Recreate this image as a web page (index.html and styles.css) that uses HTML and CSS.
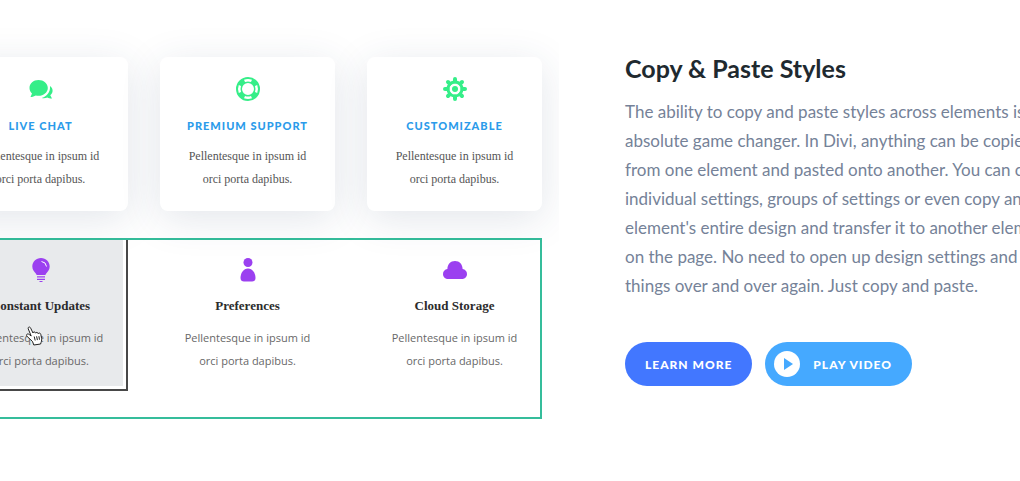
FILE: index.html
```
<!DOCTYPE html>
<html lang="en">
<head>
    <meta charset="UTF-8">
    <meta name="viewport" content="width=device-width, initial-scale=1.0">
    <title>Copy &amp; Paste Styles</title>
    <link rel="stylesheet" href="styles.css">
</head>
<body>
    <main class="feature">
        <div class="demo">
            <div class="cards">
                <div class="card">
                    <svg class="icon" viewBox="0 0 24 24">
                        <path d="M9.500 3C4.500 3 .5 6.500.5 11c0 2.500 1.200 4.200 2.500 5.500L1.500 20c2 0 4-.6 5.200-1.500.9.200 1.800.300 2.800.300 5 0 9.300-3.300 9.300-7.800S14.500 3 9.500 3z"/>
                        <path d="M21 9c1.600 1.200 2.600 2.800 2.600 4.800 0 1.900-.9 3.400-2.300 4.500L23 21.500c-1.900 0-3.600-.3-4.600-1-1.700.7-3.700.9-5.600.5C18 19.200 21.500 15 21 9z"/>
                    </svg>
                    <h3>Live Chat</h3>
                    <p>Pellentesque in ipsum id<br>orci porta dapibus.</p>
                </div>
                <div class="card">
                    <svg class="icon" viewBox="0 0 24 24">
                        <circle cx="12" cy="12" r="9" fill="none" stroke="currentColor" stroke-width="6"/>
                        <g class="cut">
                            <path d="M8 2.800Q12 1.200 16 2.800L15 5Q12 4 9 5z"/>
                            <path d="M8 21.200Q12 22.800 16 21.200L15 19Q12 20 9 19z"/>
                            <path d="M2.800 8Q1.200 12 2.800 16L5 15Q4 12 5 9z"/>
                            <path d="M21.200 8Q22.800 12 21.200 16L19 15Q20 12 19 9z"/>
                        </g>
                    </svg>
                    <h3>Premium Support</h3>
                    <p>Pellentesque in ipsum id<br>orci porta dapibus.</p>
                </div>
                <div class="card">
                    <svg class="icon" viewBox="0 0 24 24">
                        <circle cx="12" cy="12" r="7" fill="none" stroke="currentColor" stroke-width="3"/>
                        <circle cx="12" cy="12" r="3"/>
                        <g class="teeth">
                            <path d="M12 4.500V2M12 19.500V22M4.500 12H2M19.500 12H22"/>
                            <path d="M6.700 6.700L5 5M17.300 6.700L19 5M6.700 17.300L5 19M17.300 17.300L19 19"/>
                        </g>
                    </svg>
                    <h3>Customizable</h3>
                    <p>Pellentesque in ipsum id<br>orci porta dapibus.</p>
                </div>
            </div>

            <div class="modules">
                <div class="module selected">
                    <svg class="icon" viewBox="0 0 24 24">
                        <path d="M12 0C7 0 3.300 3.700 3.300 8.500c0 3.400 2 5.300 3.300 6.800.6.700.9 1.200 1 1.700h8.800c.1-.5.400-1 1-1.700 1.300-1.500 3.300-3.400 3.300-6.800C20.700 3.700 17 0 12 0z"/>
                        <path d="M8 18.200h8v1.300H8zM8 20.700h8v1.300H8zM10 23h4l-1 1h-2z"/>
                        <path class="shine" d="M12.500 3.500q4.500.5 5 5"/>
                    </svg>
                    <h3>Constant Updates</h3>
                    <p>Pellentesque in ipsum id<br>orci porta dapibus.</p>
                    <svg class="cursor" viewBox="0 0 18 20">
                        <path d="M7.500 15.500L2.200 10.500c-1.800-2 .4-3.300 2-2l2 1.500L3.300 3C2.600.9 4.900.2 5.700 2.200L8 7c.2-1.600 2.200-1.500 2.600.2.400-1.300 2.300-1 2.600.5.700-1.200 2.300-.7 2.600.7l.8 4c.4 2.200-.5 3.600-1 5.600l-6.800 1z"/>
                        <path d="M9.200 10.500l1 4M11.600 10.300l.8 3.800M13.900 10.200l.6 3.500"/>
                    </svg>
                </div>
                <div class="module">
                    <svg class="icon" viewBox="0 0 24 24">
                        <circle cx="12" cy="4.500" r="4.500"/>
                        <path d="M12 10.500c-4.500 0-7.500 4.500-7.500 9.500 0 2.500 1.500 3.500 3.500 3.500h8c2 0 3.500-1 3.500-3.500 0-5-3-9.500-7.500-9.500z"/>
                    </svg>
                    <h3>Preferences</h3>
                    <p>Pellentesque in ipsum id<br>orci porta dapibus.</p>
                </div>
                <div class="module">
                    <svg class="icon" viewBox="0 0 24 24">
                        <path d="M5 21c-3 0-5-2.200-5-5 0-2.600 1.800-4.500 4.400-4.900C4.300 6.500 7.500 3 12 3s7.700 3.500 7.600 8.100C22.200 11.500 24 13.400 24 16c0 2.800-2 5-5 5z"/>
                    </svg>
                    <h3>Cloud Storage</h3>
                    <p>Pellentesque in ipsum id<br>orci porta dapibus.</p>
                </div>
            </div>
        </div>

        <div class="copy">
            <h2>Copy &amp; Paste Styles</h2>
            <p>
                The ability to copy and paste styles across elements is an<br>
                absolute game changer. In Divi, anything can be copied<br>
                from one element and pasted onto another. You can copy<br>
                individual settings, groups of settings or even copy an<br>
                element's entire design and transfer it to another element<br>
                on the page. No need to open up design settings and edit<br>
                things over and over again. Just copy and paste.
            </p>
            <div class="buttons">
                <a class="btn" href="#">Learn More</a>
                <button class="btn btn-play" type="button">
                    <svg viewBox="0 0 26 26">
                        <circle cx="13" cy="13" r="13" fill="#fff"/>
                        <path d="M10 7l9 6-9 6z" fill="#45a9ff"/>
                    </svg>
                    Play Video
                </button>
            </div>
        </div>
    </main>
</body>
</html>
```

FILE: styles.css
```
body {
    margin: 0;
    background: #fff;
    font-family: Lato, sans-serif;
    font-variant-ligatures: none;
    overflow: hidden;
}
h2, h3, p {
    margin: 0;
}
.feature {
    display: flex;
    align-items: flex-start;
    gap: 66px;
}

/* left side: the builder preview, runs off the left edge */
.demo {
    flex: 1;
    margin-left: -47px;
    padding: 57px 17px 40px 0;
    overflow: hidden;
    text-align: center;
}
.cards, .modules {
    display: grid;
    grid-template-columns: repeat(3, 1fr);
    gap: 32px;
}
.card {
    padding: 20px 0;
    border-radius: 8px;
    background: #fff;
    box-shadow: 0 8px 40px rgba(40, 60, 100, 0.13);
}
.icon {
    display: block;
    width: 24px;
    height: 24px;
    margin: 0 auto 16px;
    fill: currentColor;
}
.card .icon {
    margin-bottom: 17px;
    color: #35ee88;
}
.cut {
    fill: #fff;
}
.teeth {
    stroke: currentColor;
    stroke-width: 4;
    stroke-linecap: round;
}
.card h3 {
    margin-bottom: 11px;
    font-size: 11px;
    font-weight: 900;
    line-height: 16px;
    letter-spacing: 1px;
    text-transform: uppercase;
    color: #2b9bea;
}
.card p {
    font-family: "Liberation Serif", serif;
    font-size: 12px;
    line-height: 23px;
    color: #555;
}
.modules {
    margin-top: 27px;
    padding-bottom: 26px;
    border: 2px solid #35bd9b;
    border-width: 2px 0;
    background: #fff;
    box-shadow: inset -2px 0 #35bd9b;
}
.module {
    padding: 18px 0;
}
.module .icon {
    color: #9b40f0;
}
.module h3 {
    margin-bottom: 12px;
    font-family: "Liberation Serif", serif;
    font-size: 13px;
    line-height: 16px;
    color: #2c2c2c;
}
.module p {
    font-family: "Open Sans", sans-serif;
    font-size: 11px;
    line-height: 23px;
    color: #686868;
}
.selected {
    position: relative;
    padding-bottom: 17px;
    border: solid #484848;
    border-width: 0 2px 2px;
    background: #e8eaec;
    box-shadow: inset -3px -3px #fff;
}
.shine {
    fill: none;
    stroke: #fff;
    stroke-width: 1;
}
.cursor {
    position: absolute;
    top: 86px;
    left: 70px;
    width: 18px;
    height: 20px;
    fill: #fff;
    stroke: #222;
    stroke-width: 1;
}

/* right side: text and buttons */
.copy {
    flex: 0 0 395px;
    min-width: 0;
    padding-top: 50px;
    white-space: nowrap;
}
.copy h2 {
    margin-bottom: 11px;
    font-size: 25px;
    line-height: 36px;
    color: #20292f;
}
.copy p {
    margin-bottom: 42px;
    font-size: 17px;
    line-height: 29px;
    color: #758298;
}
.buttons {
    display: flex;
    gap: 13px;
}
.btn {
    display: flex;
    align-items: center;
    height: 44px;
    padding: 0 20px;
    border: 0;
    border-radius: 22px;
    background: #4277ff;
    color: #fff;
    font-family: inherit;
    font-size: 12px;
    font-weight: 900;
    letter-spacing: 1px;
    text-transform: uppercase;
    text-decoration: none;
    cursor: pointer;
}
.btn-play {
    gap: 13px;
    padding-left: 9px;
    background: #45a9ff;
}
.btn-play svg {
    width: 26px;
    height: 26px;
}
```
